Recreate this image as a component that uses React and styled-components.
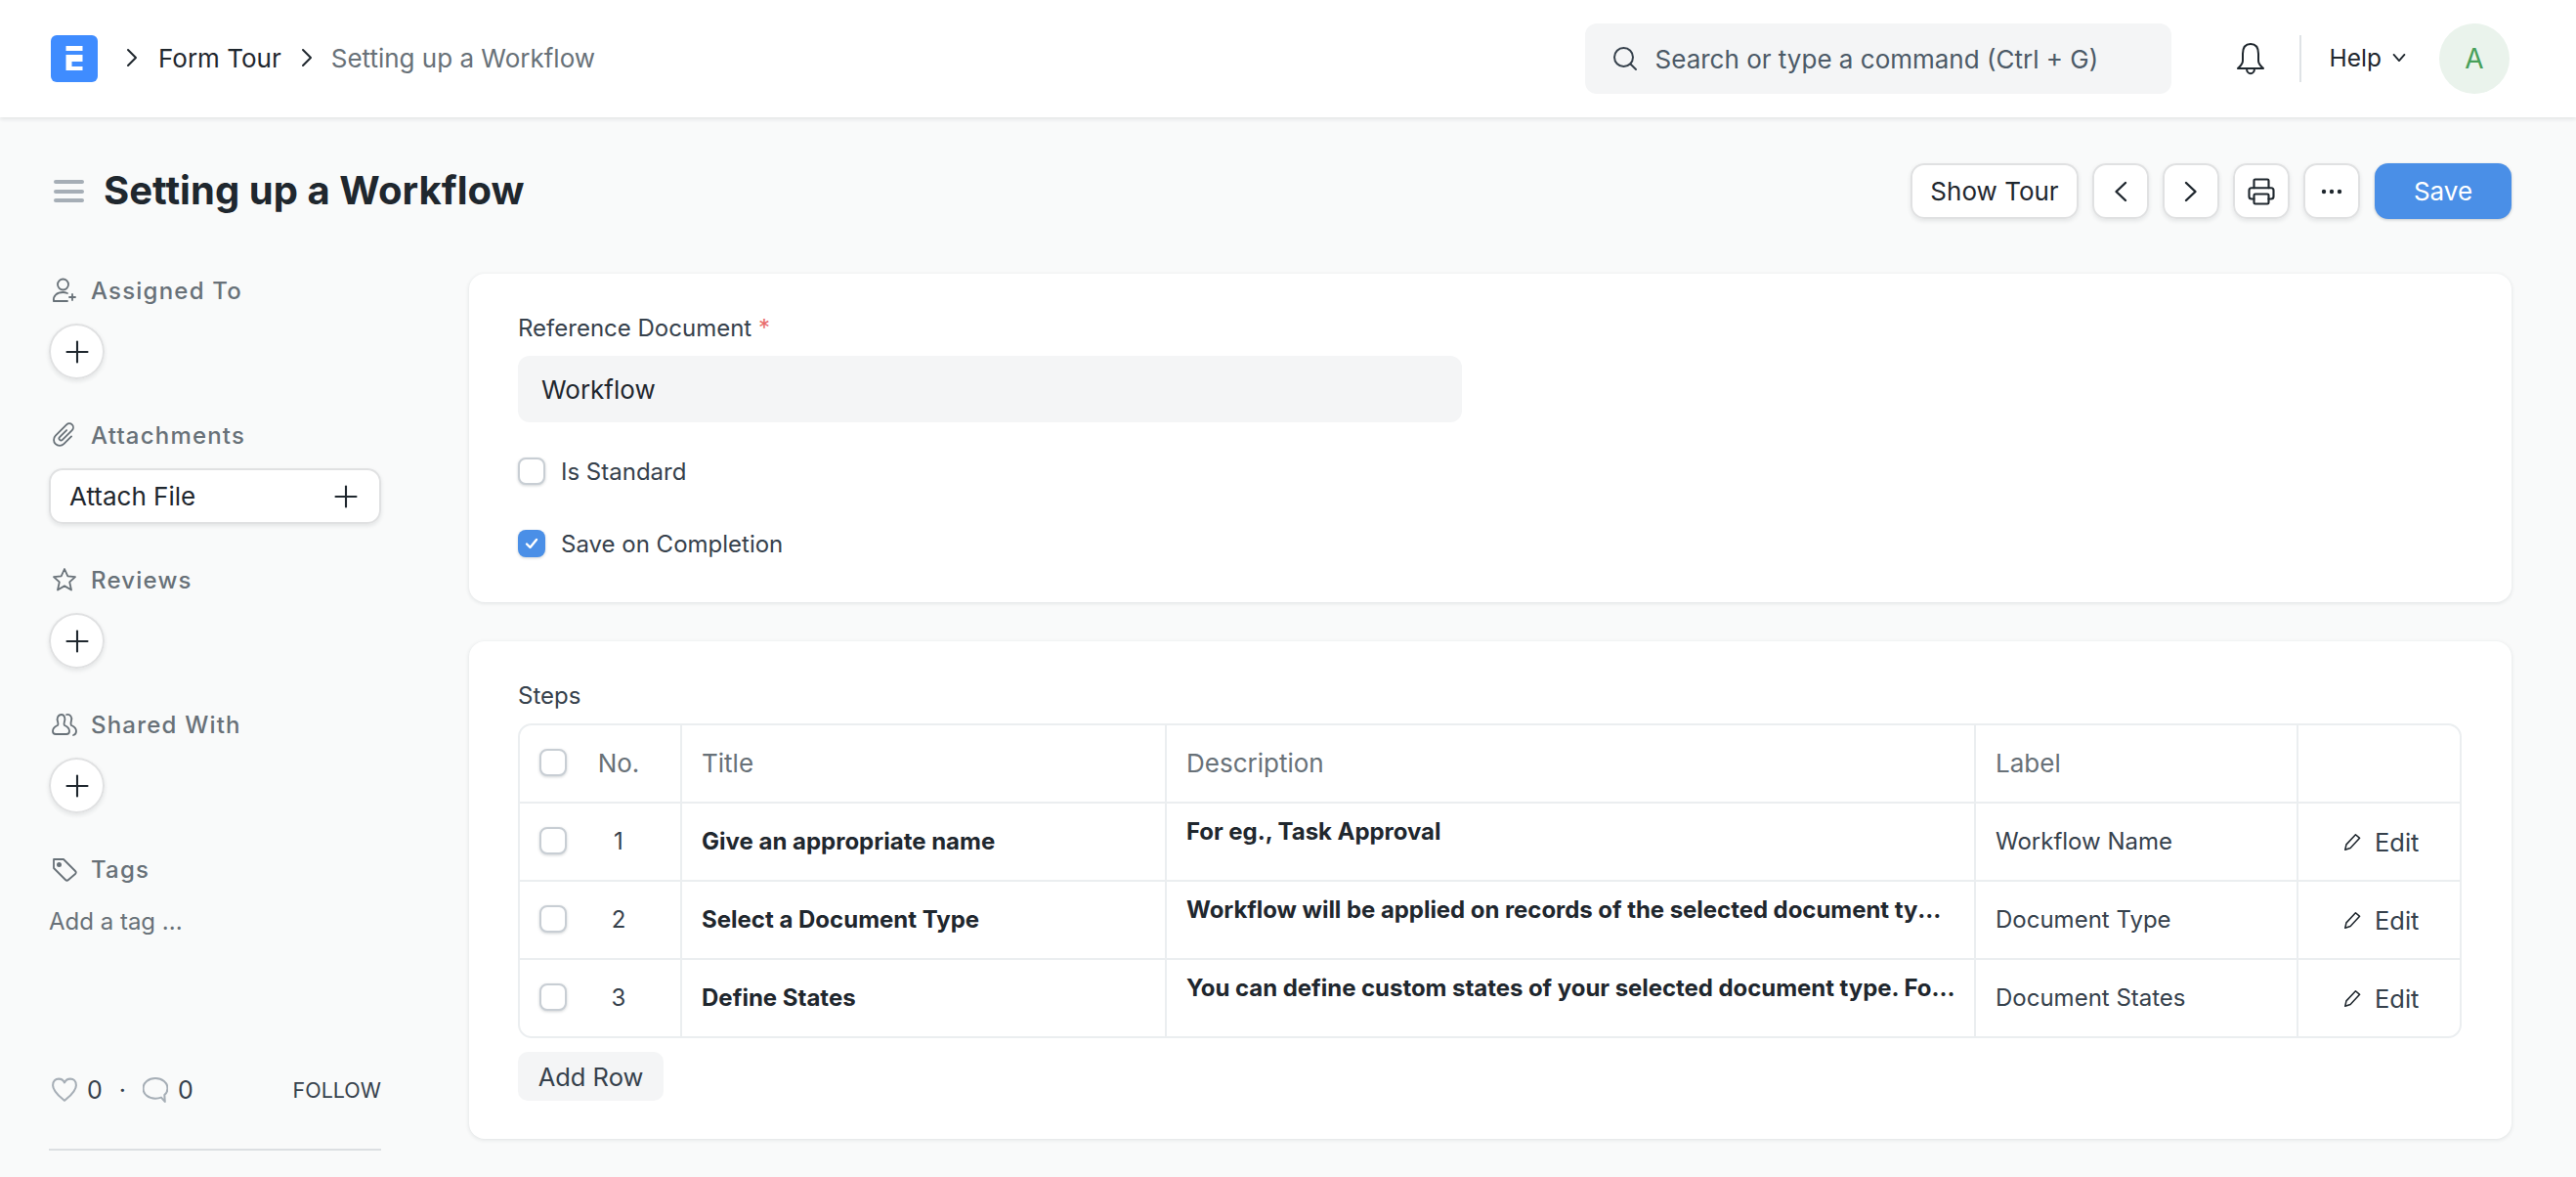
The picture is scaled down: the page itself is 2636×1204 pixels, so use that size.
import React from "react";
import styled, { createGlobalStyle } from "styled-components";
import { Plus, Printer } from "lucide-react";

const GlobalStyle = createGlobalStyle`
  html, body {
    margin: 0;
    padding: 0;
    background: #f9fafa;
    overflow: hidden;
  }
  body {
    font-family: Inter, "Noto Sans", sans-serif;
    font-size: 26px;
    color: #1f272e;
  }
  * {
    box-sizing: border-box;
  }
`;

const raised = "inset 0 0 0 2px #e0e1e2, 0 2px 4px rgba(25, 39, 52, 0.1)";

const Page = styled.div`
  width: 2636px;
  height: 1204px;
  overflow: hidden;
`;

const Navbar = styled.header`
  height: 120px;
  background: #fff;
  box-shadow: 0 2px 4px rgba(25, 39, 52, 0.1);
  display: flex;
  align-items: center;
  padding: 0 68px 0 52px;
`;

const Logo = styled.svg`
  width: 48px;
  height: 48px;
  flex: none;
`;

const Crumbs = styled.nav`
  display: flex;
  align-items: center;
  margin-top: -2px;
  margin-left: 28px;
  flex: 1;
`;

const Crumb = styled.span`
  font-size: 26px;
  margin: ${(p) => (p.$muted ? "0 0 0 18px" : "0 19px 0 20px")};
  color: ${(p) => (p.$muted ? "#687178" : "#1f272e")};
`;

const CrumbSep = styled.svg`
  width: 14px;
  height: 20px;
  flex: none;
`;

const SearchBox = styled.div`
  width: 600px;
  height: 72px;
  border-radius: 12px;
  background: #f4f5f6;
  display: flex;
  align-items: center;
  padding-left: 28px;
  font-size: 26px;
  color: #4c5a67;
  gap: 18px;
`;

const BellWrap = styled.div`
  margin-left: 64px;
  width: 34px;
  display: flex;
  justify-content: center;
`;

const NavDivider = styled.div`
  width: 2px;
  height: 48px;
  background: #dfe3e6;
  margin-left: 33px;
`;

const HelpLink = styled.div`
  margin-left: 29px;
  display: flex;
  align-items: center;
  gap: 11px;
  font-size: 24.5px;
  margin-top: -2px;
`;

const Avatar = styled.div`
  width: 72px;
  height: 72px;
  border-radius: 50%;
  background: #eaf3ec;
  color: #48a05a;
  font-size: 28px;
  display: flex;
  align-items: center;
  justify-content: center;
  margin-left: 34px;
`;

const PageHead = styled.div`
  height: 160px;
  display: flex;
  align-items: flex-start;
  padding: 47px 66px 0 55px;
`;

const Burger = styled.div`
  width: 31px;
  height: 23px;
  margin-top: 17px;
  flex: none;
  display: flex;
  flex-direction: column;
  justify-content: space-between;
  & > i {
    display: block;
    height: 4px;
    border-radius: 2px;
    background: #a6aeb6;
  }
`;

const PageTitle = styled.h1`
  margin: 0 0 0 20px;
  font-size: 40px;
  line-height: 56px;
  font-weight: 700;
  letter-spacing: 0.05px;
  flex: 1;
`;

const Actions = styled.div`
  display: flex;
  gap: 14px;
`;

const ActionButton = styled.button`
  height: 57px;
  width: ${(p) => p.$width || 58}px;
  margin-left: ${(p) => (p.$primary ? 1 : 0)}px;
  padding: 0;
  border: none;
  border-radius: 14px;
  background: ${(p) => (p.$primary ? "#4a8fe7" : "#fff")};
  color: ${(p) => (p.$primary ? "#fff" : "#1f272e")};
  font: inherit;
  font-size: 26px;
  display: flex;
  align-items: center;
  justify-content: center;
  box-shadow: ${(p) => (p.$primary ? "0 1px 3px rgba(25, 39, 52, 0.25)" : raised)};
`;

const Body = styled.div`
  display: grid;
  grid-template-columns: 340px 2090px;
  column-gap: 90px;
  padding-left: 50px;
`;

const Sidebar = styled.aside`
  display: flex;
  flex-direction: column;
  padding-top: 2px;
`;

const SideLabel = styled.div`
  height: 30px;
  margin-top: ${(p) => p.$top || 0}px;
  display: flex;
  align-items: center;
  gap: 14px;
  color: #687178;
  font-size: 24px;
  font-weight: 500;
  letter-spacing: 1.2px;
  padding-left: 3px;
`;

const SideIcon = styled.svg`
  width: 26px;
  height: 26px;
  flex: none;
`;

const RoundButton = styled.button`
  width: 57px;
  height: 57px;
  margin-top: 19px;
  border: none;
  border-radius: 50%;
  background: #fff;
  display: flex;
  align-items: center;
  justify-content: center;
  color: #1f272e;
  padding: 0;
  box-shadow: ${raised};
`;

const AttachButton = styled.button`
  width: 340px;
  height: 57px;
  margin-top: 19px;
  border: none;
  border-radius: 14px;
  background: #fff;
  display: flex;
  align-items: center;
  justify-content: space-between;
  padding: 0 18px 0 21px;
  font: inherit;
  font-size: 26px;
  color: #1f272e;
  box-shadow: ${raised};
`;

const TagHint = styled.div`
  margin-top: 24px;
  color: #687178;
  font-size: 24px;
  line-height: 30px;
`;

const SocialRow = styled.div`
  margin-top: 142px;
  height: 30px;
  display: flex;
  align-items: center;
  font-size: 25px;
  color: #36414c;
  padding-left: 3px;
`;

const Count = styled.span`
  margin-left: 10px;
`;

const Dot = styled.span`
  margin: 0 17px 0 17px;
`;

const FollowLink = styled.span`
  margin-left: auto;
  font-size: 21.5px;
`;

const SideRule = styled.div`
  height: 2px;
  background: #dcdfe2;
  margin-top: 45px;
`;

const Main = styled.main`
  display: flex;
  flex-direction: column;
  gap: 40px;
`;

const Card = styled.section`
  background: #fff;
  border-radius: 16px;
  box-shadow: 0 1px 4px rgba(25, 39, 52, 0.12);
  padding: 40px 50px 0;
  height: ${(p) => p.$height}px;
`;

const FieldLabel = styled.div`
  font-size: 24px;
  line-height: 32px;
  color: #36414c;
  & > em {
    color: #e86c6c;
    font-style: normal;
  }
`;

const InputBox = styled.div`
  width: 966px;
  height: 68px;
  margin-top: 12px;
  background: #f4f5f6;
  border-radius: 12px;
  padding-left: 24px;
  display: flex;
  align-items: center;
  font-size: 26px;
`;

const CheckRow = styled.label`
  display: flex;
  align-items: center;
  gap: 16px;
  font-size: 24px;
  color: #36414c;
  height: 30px;
  margin-top: ${(p) => p.$top}px;
`;

const CheckBox = styled.span`
  width: 28px;
  height: 28px;
  flex: none;
  display: flex;
  align-items: center;
  justify-content: center;
  border-radius: 8px;
  background: ${(p) => (p.$checked ? "#4a8fe7" : "#fff")};
  border: ${(p) => (p.$checked ? "none" : "2px solid #c8ced4")};
  box-shadow: 0 1px 3px rgba(25, 39, 52, 0.2);
`;

const Table = styled.div`
  margin-top: 12px;
  width: 1989px;
  border: 2px solid #ebeef0;
  border-radius: 14px;
  overflow: hidden;
`;

const Row = styled.div`
  display: grid;
  grid-template-columns: 164px 496px 828px 330px 167px;
  height: ${(p) => (p.$head ? 78 : 80)}px;
  border-top: ${(p) => (p.$head ? "none" : "2px solid #ebeef0")};
`;

const Cell = styled.div`
  min-width: 0;
  display: flex;
  align-items: ${(p) => (p.$top ? "flex-start" : "center")};
  padding: ${(p) => (p.$top ? "13px 18px 0 20px" : "0 20px 2px")};
  border-left: ${(p) => (p.$first ? "none" : "2px solid #ebeef0")};
  font-size: ${(p) => (p.$head ? 26 : 24)}px;
  font-weight: ${(p) => (p.$bold ? 700 : 400)};
  color: ${(p) => (p.$head ? "#687178" : p.$bold ? "#1f272e" : "#36414c")};
`;

const NoCell = styled(Cell)`
  padding: 0 0 2px 20px;
`;

const NoText = styled.span`
  flex: 1;
  text-align: center;
  padding-right: 10px;
`;

const Clip = styled.div`
  width: ${(p) => p.$width}px;
  letter-spacing: -0.05px;
  line-height: 32px;
  white-space: nowrap;
  overflow: hidden;
  text-overflow: ellipsis;
`;

const EditCell = styled(Cell)`
  padding: 0 0 0 46px;
  gap: 13px;
  font-size: 25.5px;
`;

const AddRow = styled.button`
  margin-top: 14px;
  width: 149px;
  height: 50px;
  border: none;
  border-radius: 10px;
  background: #f4f5f6;
  font: inherit;
  font-size: 25.5px;
  color: #36414c;
  padding: 0;
`;

const steps = [
  {
    no: 1,
    title: "Give an appropriate name",
    description: "For eg., Task Approval",
    clip: 788,
    label: "Workflow Name",
  },
  {
    no: 2,
    title: "Select a Document Type",
    description: "Workflow will be applied on records of the selected document type.",
    clip: 776,
    label: "Document Type",
  },
  {
    no: 3,
    title: "Define States",
    description: "You can define custom states of your selected document type. For eg.",
    clip: 788,
    label: "Document States",
  },
];

function Chevron({ left }) {
  return (
    <svg width="14" height="22" viewBox="0 0 14 22" fill="none" stroke="#1f272e" strokeWidth="2.4">
      <path d={left ? "M12 2 L2.5 11 L12 20" : "M2 2 L11.5 11 L2 20"} strokeLinecap="round" strokeLinejoin="round" />
    </svg>
  );
}

function CrumbChevron() {
  return (
    <CrumbSep viewBox="0 0 14 20" fill="none" stroke="#1f272e" strokeWidth="2">
      <path d="M3 2 L11 10 L3 18" strokeLinecap="round" strokeLinejoin="round" />
    </CrumbSep>
  );
}

function App() {
  return (
    <Page>
      <GlobalStyle />
      <Navbar>
        <Logo viewBox="0 0 48 48">
          <rect width="48" height="48" rx="6" fill="#3f8cff" />
          <path d="M15.5 11H32.5V16H15.5Z M15.5 20H32.5V27H21.5V32H32.5V36H15.5Z" fill="#fff" />
        </Logo>
        <Crumbs>
          <CrumbChevron />
          <Crumb>Form Tour</Crumb>
          <CrumbChevron />
          <Crumb $muted>Setting up a Workflow</Crumb>
        </Crumbs>
        <SearchBox>
          <svg width="26" height="26" viewBox="0 0 26 26" fill="none" stroke="#36414c" strokeWidth="2">
            <circle cx="11.5" cy="11.5" r="9.5" />
            <path d="M18.5 18.5 L24 24" strokeLinecap="round" />
          </svg>
          Search or type a command (Ctrl + G)
        </SearchBox>
        <BellWrap>
          <svg width="30" height="34" viewBox="0 0 30 34" fill="none" stroke="#1f272e" strokeWidth="2" strokeLinejoin="round">
            <path d="M15 2 C9 2 7 7 7 12 V19 C7 23 4 25 2 27 H28 C26 25 23 23 23 19 V12 C23 7 21 2 15 2 Z" />
            <path d="M11 27 C11 34 19 34 19 27" />
          </svg>
        </BellWrap>
        <NavDivider />
        <HelpLink>
          Help
          <svg width="14" height="10" viewBox="0 0 18 12" fill="none" stroke="#1f272e" strokeWidth="2.4">
            <path d="M2 2 L9 10 L16 2" strokeLinecap="round" strokeLinejoin="round" />
          </svg>
        </HelpLink>
        <Avatar>A</Avatar>
      </Navbar>

      <PageHead>
        <Burger>
          <i />
          <i />
          <i />
        </Burger>
        <PageTitle>Setting up a Workflow</PageTitle>
        <Actions>
          <ActionButton $width={172}>Show Tour</ActionButton>
          <ActionButton>
            <Chevron left />
          </ActionButton>
          <ActionButton>
            <Chevron />
          </ActionButton>
          <ActionButton>
            <Printer size={30} strokeWidth={1.7} />
          </ActionButton>
          <ActionButton>
            <svg width="22" height="6" viewBox="0 0 22 6" fill="#1f272e">
              <circle cx="3" cy="3" r="2.2" />
              <circle cx="11" cy="3" r="2.2" />
              <circle cx="19" cy="3" r="2.2" />
            </svg>
          </ActionButton>
          <ActionButton $primary $width={140}>
            Save
          </ActionButton>
        </Actions>
      </PageHead>

      <Body>
        <Sidebar>
          <SideLabel>
            <SideIcon viewBox="0 0 26 26" fill="none" stroke="#687178" strokeWidth="1.8" strokeLinecap="round">
              <circle cx="11.5" cy="7" r="5.5" />
              <path d="M16 24 H2 C1 19 5 15 11.5 15 C13 15 14.5 15.4 16 16" />
              <path d="M21 17 V23 M18 20 H24" />
            </SideIcon>
            Assigned To
          </SideLabel>
          <RoundButton>
            <Plus size={36} strokeWidth={1.4} />
          </RoundButton>

          <SideLabel $top={42}>
            <SideIcon viewBox="0 0 26 26" fill="none" stroke="#687178" strokeWidth="1.8" strokeLinecap="round" strokeLinejoin="round">
              <path transform="rotate(45 13 13)" d="M19 9 V20 A6 6 0 0 1 7 20 V4 A4 4 0 0 1 15 4 V18 A2 2 0 0 1 11 18 V8" />
            </SideIcon>
            Attachments
          </SideLabel>
          <AttachButton>
            Attach File
            <Plus size={36} strokeWidth={1.4} />
          </AttachButton>

          <SideLabel $top={42}>
            <SideIcon viewBox="0 0 26 26" fill="none" stroke="#687178" strokeWidth="1.8" strokeLinejoin="round">
              <path d="M13 2 L16.3 9.4 L24 10.2 L18.2 15.4 L20 23.5 L13 19.4 L6 23.5 L7.8 15.4 L2 10.2 L9.7 9.4 Z" />
            </SideIcon>
            Reviews
          </SideLabel>
          <RoundButton>
            <Plus size={36} strokeWidth={1.4} />
          </RoundButton>

          <SideLabel $top={42}>
            <SideIcon viewBox="0 0 26 26" fill="none" stroke="#687178" strokeWidth="1.8" strokeLinecap="round" strokeLinejoin="round">
              <path d="M10 3 C6 3 5 7 6 10 C6.5 12 7 13 6 14 C4 15 1 16 1 20 C1 22 2 23 4 23 H15 C17 23 18 22 18 20 C18 16 15 15 13 14 C12 13 12.5 12 13 10 C14 7 13 3 10 3 Z" />
              <path d="M15 3 C19 2 21 6 20 9 C19.5 11 19 13 20 14 C22 15 25 16 25 20 C25 22 24 23.5 22 24" />
            </SideIcon>
            Shared With
          </SideLabel>
          <RoundButton>
            <Plus size={36} strokeWidth={1.4} />
          </RoundButton>

          <SideLabel $top={42}>
            <SideIcon viewBox="0 0 26 26" fill="none" stroke="#687178" strokeWidth="1.8" strokeLinejoin="round">
              <path d="M2 3 H12 L24 15 C25 16 25 17 24 18 L17 24 C16 25 15 25 14 24 L2 12 Z" />
              <circle cx="7.5" cy="8.5" r="1.6" fill="#687178" />
            </SideIcon>
            Tags
          </SideLabel>
          <TagHint>Add a tag ...</TagHint>

          <SocialRow>
            <SideIcon viewBox="1 2 24 23" fill="none" stroke="#a6aeb6" strokeWidth="1.9" strokeLinejoin="round">
              <path d="M13 23.5 C9 20 2 15 2 9 C2 5 4.5 3 7.5 3 C10 3 12 4.5 13 6.5 C14 4.5 16 3 18.5 3 C21.5 3 24 5 24 9 C24 15 17 20 13 23.5 Z" />
            </SideIcon>
            <Count>0</Count>
            <Dot>·</Dot>
            <SideIcon viewBox="1 1 24 24" fill="none" stroke="#a6aeb6" strokeWidth="1.9" strokeLinejoin="round">
              <path d="M13 2 C6.5 2 1.5 6 1.5 11.5 C1.5 17 6.5 21 13 21 C15 21 17 20.6 18.5 20 L22 24 L21.6 17.6 C23.5 16 24.5 14 24.5 11.5 C24.5 6 19.5 2 13 2 Z" />
            </SideIcon>
            <Count>0</Count>
            <FollowLink>FOLLOW</FollowLink>
          </SocialRow>
          <SideRule />
        </Sidebar>

        <Main>
          <Card $height={336}>
            <FieldLabel>
              Reference Document <em>*</em>
            </FieldLabel>
            <InputBox>Workflow</InputBox>
            <CheckRow $top={35}>
              <CheckBox />
              Is Standard
            </CheckRow>
            <CheckRow $top={44}>
              <CheckBox $checked>
                <svg width="18" height="18" viewBox="0 0 18 18" fill="none" stroke="#fff" strokeWidth="2.4">
                  <path d="M4 9.5 L7.5 13 L14 5" strokeLinecap="round" strokeLinejoin="round" />
                </svg>
              </CheckBox>
              Save on Completion
            </CheckRow>
          </Card>

          <Card $height={509}>
            <FieldLabel>Steps</FieldLabel>
            <Table>
              <Row $head>
                <NoCell $first $head>
                  <CheckBox />
                  <NoText>No.</NoText>
                </NoCell>
                <Cell $head>Title</Cell>
                <Cell $head>Description</Cell>
                <Cell $head>Label</Cell>
                <Cell />
              </Row>
              {steps.map((step) => (
                <Row key={step.no}>
                  <NoCell $first>
                    <CheckBox />
                    <NoText>{step.no}</NoText>
                  </NoCell>
                  <Cell $bold>{step.title}</Cell>
                  <Cell $bold $top>
                    <Clip $width={step.clip}>{step.description}</Clip>
                  </Cell>
                  <Cell>{step.label}</Cell>
                  <EditCell>
                    <svg width="19" height="19" viewBox="0 0 16 16" fill="none" stroke="#1f272e" strokeWidth="1.3" strokeLinejoin="round">
                      <path d="M1.5 14.5 L2.5 10 L10.5 1.5 L14 4.5 L6 13 Z" />
                    </svg>
                    Edit
                  </EditCell>
                </Row>
              ))}
            </Table>
            <AddRow>Add Row</AddRow>
          </Card>
        </Main>
      </Body>
    </Page>
  );
}

export default App;
